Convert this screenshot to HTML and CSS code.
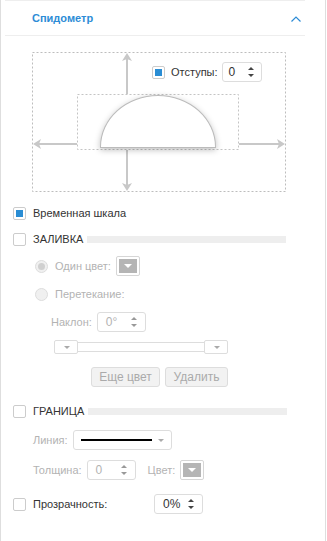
FILE: index.html
```html
<!DOCTYPE html>
<html lang="ru">
<head>
    <meta charset="UTF-8">
    <title>Спидометр</title>
    <link rel="stylesheet" href="styles.css">
</head>
<body>
    <div class="panel">
        <div class="inner">
            <div class="header">
                <span class="title">Спидометр</span>
                <svg class="chevron" width="10" height="6" viewBox="0 0 10 6">
                    <polyline points="0.5,5.5 5,1 9.5,5.5" fill="none" stroke="#2d8cd6" stroke-width="1.2"/>
                </svg>
            </div>

            <div class="body">
                <div class="diagram">
                    <svg class="frame" width="254" height="140" viewBox="0 0 254 140">
                        <rect x="0.5" y="0.5" width="253" height="139" fill="none" stroke="#bdbdbd" stroke-dasharray="2 2"/>
                        <rect x="45.5" y="42.5" width="161" height="55" fill="none" stroke="#c4c4c4" stroke-dasharray="2 2"/>
                        <g stroke="#c8c8c8" stroke-width="2">
                            <line x1="95" y1="6" x2="95" y2="42"/>
                            <line x1="95" y1="98" x2="95" y2="134"/>
                            <line x1="6" y1="92" x2="45" y2="92"/>
                            <line x1="207" y1="92" x2="248" y2="92"/>
                        </g>
                        <g fill="#c8c8c8">
                            <polygon points="95,1 100,9 95,7 90,9"/>
                            <polygon points="95,139 100,131 95,133 90,131"/>
                            <polygon points="1,92 9,87 7,92 9,97"/>
                            <polygon points="253,92 245,87 247,92 245,97"/>
                        </g>
                    </svg>
                    <div class="gauge"></div>
                    <div class="offsets">
                        <span class="check checked"></span>
                        <span class="label">Отступы:</span>
                        <div class="spin spin-small">
                            <span>0</span>
                            <svg class="arrows" width="8" height="14" viewBox="0 0 8 14">
                                <polygon points="1,5 4,2 7,5" fill="#444"/>
                                <polygon points="1,9 4,12 7,9" fill="#444"/>
                            </svg>
                        </div>
                    </div>
                </div>

                <div class="row row-top">
                    <span class="check checked"></span>
                    <span class="label">Временная шкала</span>
                </div>

                <div class="row">
                    <span class="check"></span>
                    <span class="label">ЗАЛИВКА</span>
                    <span class="section-bar"></span>
                </div>

                <div class="sub radio-row">
                    <span class="radio selected"></span>
                    <span class="label dim">Один цвет:</span>
                    <span class="color-btn"><i></i></span>
                </div>

                <div class="sub radio-row">
                    <span class="radio"></span>
                    <span class="label dim">Перетекание:</span>
                </div>

                <div class="sub tilt-row">
                    <span class="label dim">Наклон:</span>
                    <div class="spin">
                        <span class="dim">0°</span>
                        <svg class="arrows" width="8" height="14" viewBox="0 0 8 14">
                            <polygon points="1,5 4,2 7,5" fill="#999"/>
                            <polygon points="1,9 4,12 7,9" fill="#999"/>
                        </svg>
                    </div>
                </div>

                <div class="gradient">
                    <span class="stop"><i></i></span>
                    <span class="track"></span>
                    <span class="stop"><i></i></span>
                </div>

                <div class="buttons">
                    <span class="btn">Еще цвет</span>
                    <span class="btn">Удалить</span>
                </div>

                <div class="row row-border">
                    <span class="check"></span>
                    <span class="label">ГРАНИЦА</span>
                    <span class="section-bar"></span>
                </div>

                <div class="sub2 line-row">
                    <span class="label dim">Линия:</span>
                    <div class="select">
                        <span class="line-sample"></span>
                        <i class="tri"></i>
                    </div>
                </div>

                <div class="sub2 line-row">
                    <span class="label dim">Толщина:</span>
                    <div class="spin">
                        <span class="dim">0</span>
                        <svg class="arrows" width="8" height="14" viewBox="0 0 8 14">
                            <polygon points="1,5 4,2 7,5" fill="#999"/>
                            <polygon points="1,9 4,12 7,9" fill="#999"/>
                        </svg>
                    </div>
                    <span class="label dim color-label">Цвет:</span>
                    <span class="color-btn"><i></i></span>
                </div>

                <div class="row row-opacity">
                    <span class="check"></span>
                    <span class="label opacity-label">Прозрачность:</span>
                    <div class="spin">
                        <span>0%</span>
                        <svg class="arrows" width="8" height="14" viewBox="0 0 8 14">
                            <polygon points="1,5 4,2 7,5" fill="#444"/>
                            <polygon points="1,9 4,12 7,9" fill="#444"/>
                        </svg>
                    </div>
                </div>
            </div>
            <div class="footer-line"></div>
        </div>
    </div>
</body>
</html>
```
FILE: styles.css
```css
body {
    margin: 0;
    font-family: "Liberation Sans", Arial, sans-serif;
    font-size: 11px;
    color: #333;
    background: #fff;
}

.panel {
    width: 326px;
    height: 541px;
    box-sizing: border-box;
    border-left: 1px solid #dedede;
    border-right: 1px solid #dedede;
    overflow: hidden;
}

.inner {
    width: 300px;
    margin-left: 4px;
    border-top: 1px solid #eee;
}

.header {
    height: 34px;
    border-bottom: 1px solid #eee;
    display: flex;
    align-items: center;
    justify-content: space-between;
    padding: 0 4px 0 27px;
}

.title {
    color: #2d8cd6;
    font-weight: bold;
    font-size: 11px;
}

.chevron {
    margin-top: 1px;
}

.body {
    padding-left: 8px;
    height: 503px;
}

/* diagram */
.diagram {
    position: relative;
    width: 254px;
    height: 140px;
    margin: 16px 0 0 19px;
}

.frame {
    display: block;
}

.gauge {
    position: absolute;
    left: 68px;
    top: 43px;
    width: 114px;
    height: 51px;
    background: #fff;
    border: 1px solid #bbb;
    border-radius: 58px 58px 0 0 / 52px 52px 0 0;
    box-shadow: 0 2px 6px rgba(0, 0, 0, 0.25);
}

.offsets {
    position: absolute;
    left: 120px;
    top: 10px;
    height: 20px;
    display: flex;
    align-items: center;
}

.offsets .label {
    margin-left: 6px;
    margin-right: 4px;
}

/* controls */
.check {
    width: 11px;
    height: 11px;
    border: 1px solid #ccc;
    border-radius: 2px;
    background: #fff;
    flex: none;
    position: relative;
}

.check.checked::after {
    content: "";
    position: absolute;
    left: 2px;
    top: 2px;
    width: 7px;
    height: 7px;
    background: #2a8dd4;
}

.radio {
    width: 11px;
    height: 11px;
    border: 1px solid #ddd;
    border-radius: 50%;
    background: #f0f0f0;
    flex: none;
    position: relative;
}

.radio.selected::after {
    content: "";
    position: absolute;
    left: 2px;
    top: 2px;
    width: 7px;
    height: 7px;
    border-radius: 50%;
    background: #d0d0d0;
}

.label {
    white-space: nowrap;
}

.dim {
    color: #b3b3b3;
}

.spin {
    border: 1px solid #ddd;
    border-radius: 3px;
    display: flex;
    align-items: center;
    justify-content: space-between;
    padding: 0 7px 0 8px;
    box-sizing: border-box;
    width: 49px;
    height: 20px;
    flex: none;
    font-size: 12px;
}

.spin-small {
    width: 40px;
    padding-left: 6px;
    padding-right: 6px;
}

.arrows {
    display: block;
}

.row {
    display: flex;
    align-items: center;
    height: 26px;
}

.row .label {
    margin-left: 7px;
}

.row-top {
    margin-top: 8px;
}

.section-bar {
    width: 199px;
    height: 7px;
    background: #eee;
    margin-left: 4px;
}

.sub {
    display: flex;
    align-items: center;
    height: 28px;
    padding-left: 22px;
}

.radio-row .label {
    margin-left: 7px;
}

.color-btn {
    width: 24px;
    height: 20px;
    box-sizing: border-box;
    border: 1px solid #d6d6d6;
    border-radius: 2px;
    padding: 2px;
    margin-left: 5px;
    flex: none;
    display: flex;
}

.color-btn i {
    flex: 1;
    background: #b5b5b5;
    display: flex;
    align-items: center;
    justify-content: center;
}

.color-btn i::after {
    content: "";
    border-left: 4px solid transparent;
    border-right: 4px solid transparent;
    border-top: 4px solid #fff;
}

.tilt-row {
    padding-left: 38px;
}

.tilt-row .spin {
    margin-left: 5px;
}

.gradient {
    display: flex;
    align-items: center;
    height: 22px;
    padding-left: 41px;
}

.stop {
    width: 24px;
    height: 14px;
    box-sizing: border-box;
    border: 1px solid #ddd;
    border-radius: 2px;
    display: flex;
    align-items: center;
    justify-content: flex-end;
    padding-right: 7px;
}

.stop i,
.tri {
    border-left: 3px solid transparent;
    border-right: 3px solid transparent;
    border-top: 3px solid #aaa;
}

.track {
    width: 126px;
    height: 10px;
    box-sizing: border-box;
    border: 1px solid #ddd;
    border-left: none;
    border-right: none;
}

.buttons {
    display: flex;
    height: 28px;
    align-items: center;
    margin-top: 5px;
    padding-left: 78px;
    gap: 5px;
}

.btn {
    height: 20px;
    box-sizing: border-box;
    border: 1px solid #ddd;
    border-radius: 3px;
    background: #f2f2f2;
    color: #aaa;
    display: flex;
    align-items: center;
    justify-content: center;
    width: 69px;
    font-size: 12px;
}

.btn + .btn {
    width: 63px;
}

.row-border {
    margin-top: 7px;
}

.sub2 {
    display: flex;
    align-items: center;
    height: 28px;
    padding-left: 20px;
    margin-top: 2px;
}

.select {
    width: 99px;
    height: 20px;
    box-sizing: border-box;
    border: 1px solid #ddd;
    border-radius: 3px;
    margin-left: 5px;
    display: flex;
    align-items: center;
    padding: 0 7px;
    justify-content: space-between;
}

.line-sample {
    width: 71px;
    height: 2px;
    background: #000;
}

.line-row .spin {
    margin-left: 5px;
}

.color-label {
    margin-left: 12px;
}

.color-label + .color-btn {
    margin-left: 5px;
}

.row-opacity {
    margin-top: 6px;
    height: 28px;
}

.opacity-label {
    width: 121px;
}

.footer-line {
    height: 1px;
    background: #eee;
    margin-left: 6px;
}
```
